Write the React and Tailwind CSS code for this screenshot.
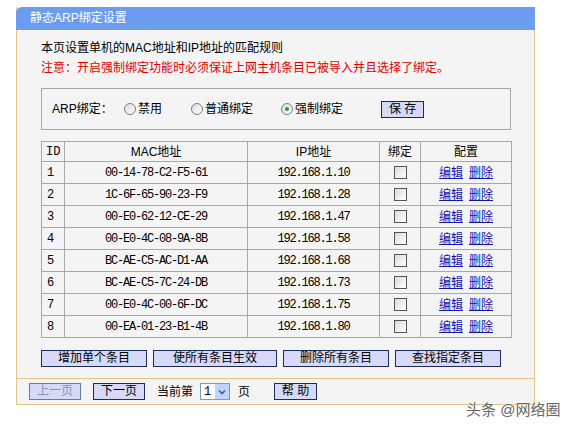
import React from "react";

const rows = [
  ["1", "00-14-78-C2-F5-61", "192.168.1.10"],
  ["2", "1C-6F-65-90-23-F9", "192.168.1.28"],
  ["3", "00-E0-62-12-CE-29", "192.168.1.47"],
  ["4", "00-E0-4C-08-9A-8B", "192.168.1.58"],
  ["5", "BC-AE-C5-AC-D1-AA", "192.168.1.68"],
  ["6", "BC-AE-C5-7C-24-DB", "192.168.1.73"],
  ["7", "00-E0-4C-00-6F-DC", "192.168.1.75"],
  ["8", "00-EA-01-23-B1-4B", "192.168.1.80"],
];

const cjk = { fontFamily: '"Liberation Sans", "Noto Sans CJK SC", sans-serif' };
const mono = { fontFamily: '"Liberation Mono", "Noto Sans CJK SC", monospace' };

function Btn({ children, className = "", disabled }) {
  return (
    <button
      className={`h-[17px] border border-[#1c2a5c] bg-[#d6daf6] text-[12px] leading-[15px] ${
        disabled ? "text-[#8a90b8] border-[#6a78a8]" : "text-black"
      } ${className}`}
    >
      {children}
    </button>
  );
}

function Radio({ checked, label, className = "" }) {
  return (
    <span className={`flex items-center ${className}`}>
      <span className="w-[12px] h-[12px] rounded-full border border-[#6f7f90] bg-gradient-to-br from-[#dcdcdc] to-white flex items-center justify-center">
        {checked && <span className="w-[4px] h-[4px] rounded-full bg-[#2f9a2f]" />}
      </span>
      <span className="ml-[2px]">{label}</span>
    </span>
  );
}

function Check() {
  return (
    <span className="inline-block w-[13px] h-[13px] border border-[#555] bg-gradient-to-br from-[#dcdcdc] to-white align-middle" />
  );
}

export default function App() {
  return (
    <div className="relative w-[568px] h-[428px] bg-white pt-[7px] pl-[16px] text-[12px] text-black" style={cjk}>
      <div className="w-[519px] bg-[#f4f4f4] border-x border-b border-[#e6c58c]">
        <div className="h-[23px] bg-[#6b9cf0] rounded-tl-md text-white leading-[23px] pl-[14px] -mx-px">
          静态ARP绑定设置
        </div>

        <div className="pl-[24px] pt-[8px]">
          <div className="leading-[20px]">本页设置单机的MAC地址和IP地址的匹配规则</div>
          <div className="leading-[20px] text-[#e00000]">
            注意：开启强制绑定功能时必须保证上网主机条目已被导入并且选择了绑定。
          </div>

          <div className="mt-[10px] w-[470px] h-[42px] border border-[#a8a8a8] flex items-center pl-[10px]">
            <span className="w-[72px]">ARP绑定：</span>
            <Radio label="禁用" />
            <Radio label="普通绑定" className="ml-[29px]" />
            <Radio label="强制绑定" checked className="ml-[28px]" />
            <Btn className="w-[43px] ml-[38px]">保 存</Btn>
          </div>

          <table className="mt-[11px] w-[470px] border-collapse table-fixed">
            <colgroup>
              <col className="w-[23px]" />
              <col className="w-[183px]" />
              <col className="w-[132px]" />
              <col className="w-[41px]" />
              <col className="w-[91px]" />
            </colgroup>
            <thead>
              <tr className="h-[20px]">
                <th className="border border-[#a8a8a8] font-normal text-left pl-[4px]" style={mono}>ID</th>
                <th className="border border-[#a8a8a8] font-normal">MAC地址</th>
                <th className="border border-[#a8a8a8] font-normal">IP地址</th>
                <th className="border border-[#a8a8a8] font-normal">绑定</th>
                <th className="border border-[#a8a8a8] font-normal">配置</th>
              </tr>
            </thead>
            <tbody>
              {rows.map(([id, mac, ip]) => (
                <tr key={id} className="h-[22px]">
                  <td className="border border-[#a8a8a8] pl-[5px] tracking-[-1px]" style={mono}>{id}</td>
                  <td className="border border-[#a8a8a8] text-center tracking-[-1.2px]" style={mono}>{mac}</td>
                  <td className="border border-[#a8a8a8] text-center tracking-[-1.2px]" style={mono}>{ip}</td>
                  <td className="border border-[#a8a8a8] text-center leading-none"><Check /></td>
                  <td className="border border-[#a8a8a8] text-center">
                    <a className="text-[#1414b0] underline">编辑</a>
                    <a className="text-[#1414b0] underline ml-[6px]">删除</a>
                  </td>
                </tr>
              ))}
            </tbody>
          </table>

          <div className="mt-[12px] flex gap-[6px]">
            <Btn className="w-[106px]">增加单个条目</Btn>
            <Btn className="w-[124px]">使所有条目生效</Btn>
            <Btn className="w-[106px]">删除所有条目</Btn>
            <Btn className="w-[106px]">查找指定条目</Btn>
          </div>
        </div>

        <div className="mt-[11px] border-t border-[#e6c58c] h-[26px] flex items-center pl-[12px]">
          <Btn className="w-[52px]" disabled>上一页</Btn>
          <Btn className="w-[52px] ml-[12px]">下一页</Btn>
          <span className="ml-[12px]">当前第</span>
          <span className="ml-[7px] w-[30px] h-[17px] border border-[#7f9db9] bg-white flex items-center">
            <span className="flex-1 pl-[3px]" style={mono}>1</span>
            <span className="w-[14px] h-[15px] bg-[#c1d3fb] flex items-center justify-center">
              <svg width="8" height="6" viewBox="0 0 8 6">
                <path d="M1 1.5 L4 4.5 L7 1.5" stroke="#3b5ea8" strokeWidth="1.6" fill="none" />
              </svg>
            </span>
          </span>
          <span className="ml-[8px]">页</span>
          <Btn className="w-[43px] ml-[24px]">帮 助</Btn>
        </div>
      </div>

      <div
        className="absolute left-[466px] top-[399px] text-[15px] text-[#666]"
        style={{ textShadow: "0 0 2px #fff" }}
      >
        头条 @网络圈
      </div>
    </div>
  );
}
